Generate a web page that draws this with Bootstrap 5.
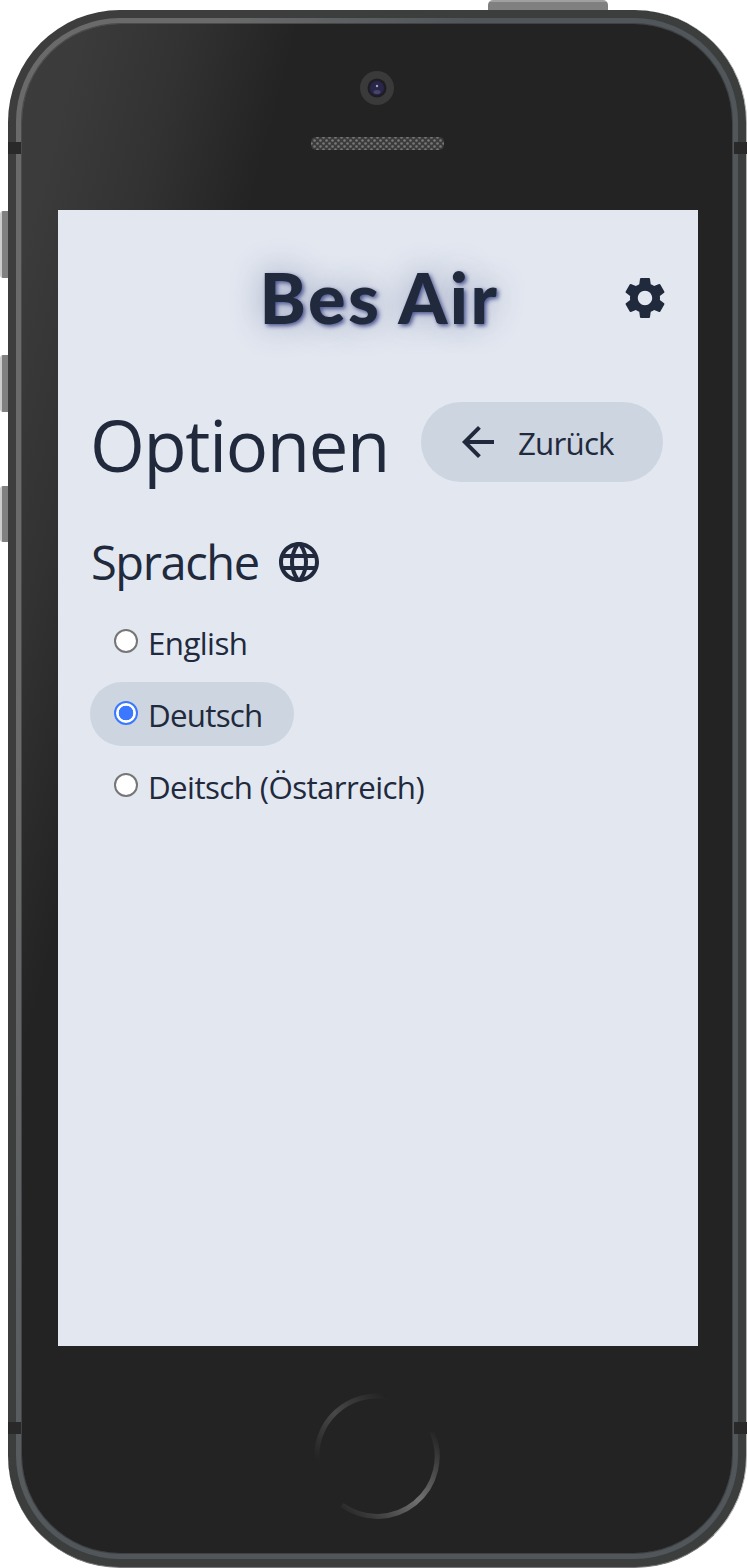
<!DOCTYPE html>
<html lang="de">
<head>
<meta charset="utf-8">
<meta name="viewport" content="width=device-width, initial-scale=1">
<title>Bes Air – Optionen</title>
<link href="https://cdn.jsdelivr.net/npm/bootstrap@5.3.0/dist/css/bootstrap.min.css" rel="stylesheet">
<style>
  body { background: #fff; color: #21293c; font-family: "Open Sans", "Noto Sans", sans-serif; overflow: hidden; }
  .stage { width: 748px; height: 1568px; padding: 10px 0 0 8px; overflow: hidden; }
  .phone { width: 739px; height: 1558px; padding: 8px; border-radius: 112px; background: linear-gradient(105deg, #3d3d3d 0 20%, #3b3e3d 40%); border-right: 1px solid #b5b5b5; border-bottom: 1px solid #777; }
  .rim { height: 100%; padding: 6px; border-radius: 104px; background: linear-gradient(105deg, #6a6a6a 0 18%, #50565a 40%); }
  .glass { height: 100%; border-radius: 98px; background: linear-gradient(105deg, #3c3c3c 0, #3b3b3b 60px, #323232 160px, #232323 268px); box-shadow: 0 0 0 1px rgba(50,50,50,.55); }
  .brow { height: 186px; padding-top: 47px; }
  .lens { width: 34px; height: 34px; }
  .grille { width: 135px; height: 15px; margin-top: 31px; }
  .app { width: 640px; height: 1136px; margin-left: 36px; background: #e2e7f0; padding: 0 32px; }
  .side-key { position: absolute; left: 0; width: 8px; background: linear-gradient(90deg, #ccc 0 2px, #808080 2px); border-radius: 3px 0 0 3px; }
  .top-key { position: absolute; left: 488px; top: 0; width: 120px; height: 10px; background: linear-gradient(#a0a0a0 0 2px, #808080 2px); border-radius: 5px 5px 0 0; }
  .seam { position: absolute; width: 13px; height: 12px; background: #292929; }
  .topbar { height: 176px; }
  .brand { font: 900 70px/1 Lato, sans-serif; letter-spacing: 2.5px; padding: 0 0 2px 48px; text-shadow: 2px 2px 4px #4b5590, 0 0 32px rgba(60,70,125,.45); }
  .gear { margin-right: -3px; }
  .title { font-size: 70.5px; font-weight: 400; line-height: 90px; padding-top: 6px; letter-spacing: -1.3px; }
  .back { width: 242px; height: 80px; margin-right: 3px; padding-left: 33px; background: #cdd5e0; font-size: 31.3px; letter-spacing: -.8px; color: inherit; border: 0; }
  .back span { padding-top: 2px; }
  .sub { font-size: 47px; font-weight: 400; letter-spacing: -1.4px; line-height: 64px; padding-left: 1px; }
  .lang-row { margin-top: 40px; }
  .opt { height: 64px; padding: 0 32px 0 24px; font-size: 31.3px; border-radius: 32px; letter-spacing: -.6px; }
  .opt span { padding-top: 2px; }
  .opt.chosen { background: #cdd5e0; letter-spacing: -.75px; }
  .dot { appearance: none; width: 24px; height: 24px; margin: 0 10px 2px 0; border: 2px solid #767676; border-radius: 50%; background: #fff; }
  .dot:checked { border-color: #3b78ff; background: radial-gradient(circle, #3b78ff 0 7px, #fff 7.6px); }
  .foot { height: 208px; padding: 46px 1px 0 0; }
</style>
</head>
<body>
<div class="stage position-relative">
  <div class="top-key"></div>
  <div class="side-key" style="top:211px;height:67px"></div>
  <div class="side-key" style="top:355px;height:57px"></div>
  <div class="side-key" style="top:486px;height:56px"></div>
  <div class="phone">
    <div class="rim">
      <div class="glass">
        <div class="brow d-flex flex-column align-items-center">
          <svg class="lens" viewBox="0 0 34 34"><circle cx="17" cy="17" r="17" fill="#3a3a3a"/><circle cx="17" cy="17" r="9.5" fill="#1e1d25"/><circle cx="17" cy="17" r="7" fill="#29264a"/><ellipse cx="17" cy="21" rx="3.5" ry="2" fill="#47446a"/><circle cx="17" cy="15" r="1.2" fill="#a5a5c0"/></svg>
          <svg class="grille" viewBox="0 0 135 15"><defs><pattern id="mesh" width="6" height="6" patternUnits="userSpaceOnUse"><rect width="6" height="6" fill="#3b3b3b"/><circle cx="1.5" cy="1.5" r="1.3" fill="#777"/><circle cx="4.5" cy="4.5" r="1.3" fill="#777"/></pattern></defs><rect x="1" y="1" width="133" height="13" rx="5" fill="url(#mesh)"/></svg>
        </div>
        <main class="app">
          <header class="topbar d-flex align-items-center position-relative">
            <div class="brand flex-fill text-center">Bes Air</div>
            <svg class="gear" width="48" height="48" viewBox="0 0 24 24" fill="currentColor"><path d="M19.43 12.98c.04-.32.07-.64.07-.98s-.03-.66-.07-.98l2.11-1.65c.19-.15.24-.42.12-.64l-2-3.46c-.12-.22-.39-.3-.61-.22l-2.49 1c-.52-.4-1.08-.73-1.69-.98l-.38-2.65C14.46 2.18 14.25 2 14 2h-4c-.25 0-.46.18-.49.42l-.38 2.65c-.61.25-1.17.59-1.69.98l-2.49-1c-.23-.09-.49 0-.61.22l-2 3.46c-.13.22-.07.49.12.64l2.11 1.65c-.04.32-.07.65-.07.98s.03.66.07.98l-2.11 1.65c-.19.15-.24.42-.12.64l2 3.46c.12.22.39.3.61.22l2.49-1c.52.4 1.08.73 1.69.98l.38 2.65c.03.24.24.42.49.42h4c.25 0 .46-.18.49-.42l.38-2.65c.61-.25 1.17-.59 1.69-.98l2.49 1c.23.09.49 0 .61-.22l2-3.46c.12-.22.07-.49-.12-.64l-2.11-1.65zM12 15.6c-1.98 0-3.6-1.62-3.6-3.6s1.62-3.6 3.6-3.6 3.6 1.62 3.6 3.6-1.62 3.6-3.6 3.6z"/></svg>
          </header>
          <div class="d-flex align-items-center justify-content-between pt-2">
            <h1 class="title m-0">Optionen</h1>
            <button class="back d-flex align-items-center rounded-pill"><svg class="me-3" width="48" height="48" viewBox="0 0 24 24" fill="currentColor"><path d="M20 11H7.83l5.59-5.59L12 4l-8 8 8 8 1.41-1.41L7.83 13H20v-2z"/></svg><span>Zurück</span></button>
          </div>
          <div class="lang-row d-flex align-items-center">
            <h2 class="sub m-0">Sprache</h2>
            <svg class="ms-3" width="48" height="48" viewBox="0 0 24 24" fill="currentColor"><path d="M11.99 2C6.47 2 2 6.48 2 12s4.47 10 9.99 10C17.52 22 22 17.52 22 12S17.52 2 11.99 2zm6.93 6h-2.95c-.32-1.25-.78-2.45-1.38-3.56 1.84.63 3.37 1.91 4.33 3.56zM12 4.04c.83 1.2 1.48 2.53 1.91 3.96h-3.82c.43-1.43 1.08-2.76 1.91-3.96zM4.26 14C4.1 13.36 4 12.69 4 12s.1-1.36.26-2h3.38c-.08.66-.14 1.32-.14 2s.06 1.34.14 2H4.26zm.82 2h2.95c.32 1.25.78 2.45 1.38 3.56-1.84-.63-3.37-1.9-4.33-3.56zm2.95-8H5.08c.96-1.66 2.49-2.93 4.33-3.56C8.81 5.55 8.35 6.75 8.03 8zM12 19.96c-.83-1.2-1.48-2.53-1.91-3.96h3.82c-.43 1.43-1.08 2.76-1.91 3.96zM14.34 14H9.66c-.09-.66-.16-1.32-.16-2s.07-1.35.16-2h4.68c.09.65.16 1.32.16 2s-.07 1.34-.16 2zm.25 5.56c.6-1.11 1.06-2.31 1.38-3.56h2.95c-.96 1.65-2.49 2.93-4.33 3.56zM16.36 14c.08-.66.14-1.32.14-2s-.06-1.34-.14-2h3.38c.16.64.26 1.31.26 2s-.1 1.36-.26 2h-3.38z"/></svg>
          </div>
          <div class="d-flex flex-column align-items-start gap-2 mt-3">
            <label class="opt d-flex align-items-center"><input class="dot" type="radio" name="lang"><span>English</span></label>
            <label class="opt chosen d-flex align-items-center"><input class="dot" type="radio" name="lang" checked><span>Deutsch</span></label>
            <label class="opt d-flex align-items-center"><input class="dot" type="radio" name="lang"><span>Deitsch (Östarreich)</span></label>
          </div>
        </main>
        <div class="foot d-flex justify-content-center">
          <svg width="128" height="128" viewBox="0 0 128 128" fill="none" stroke-width="5"><defs><linearGradient id="arcA" x1="0" y1="1" x2="1" y2="0"><stop offset="0" stop-color="#222"/><stop offset=".5" stop-color="#484848"/><stop offset="1" stop-color="#222"/></linearGradient><linearGradient id="arcB" x1="0" y1="1" x2="1" y2="0"><stop offset="0" stop-color="#222"/><stop offset=".5" stop-color="#707070"/><stop offset="1" stop-color="#222"/></linearGradient></defs><path d="M4 70A60 60 0 0 1 74 5" stroke="url(#arcA)"/><path d="M29 113A60 60 0 0 0 119 40" stroke="url(#arcB)"/></svg>
        </div>
      </div>
    </div>
  </div>
  <div class="seam" style="left:8px;top:142px"></div>
  <div class="seam" style="left:734px;top:142px"></div>
  <div class="seam" style="left:8px;top:1422px"></div>
  <div class="seam" style="left:734px;top:1422px"></div>
</div>
<script src="https://cdn.jsdelivr.net/npm/bootstrap@5.3.0/dist/js/bootstrap.bundle.min.js"></script>
</body>
</html>
